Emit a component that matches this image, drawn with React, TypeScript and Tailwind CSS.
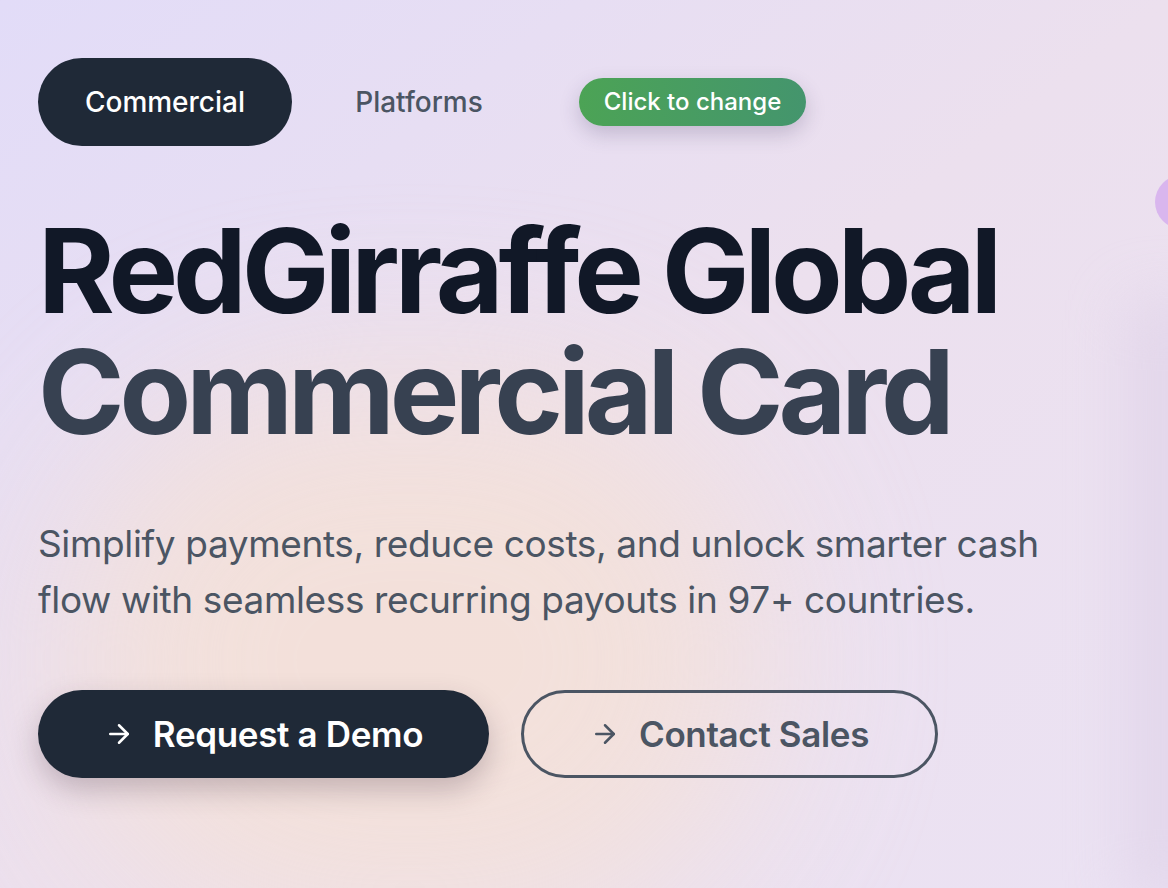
import React, { useState } from 'react';

const tabs = ['Commercial', 'Platforms'];

function Arrow({ className }: { className: string }) {
  return (
    <svg
      viewBox="0 0 24 24"
      fill="none"
      stroke="currentColor"
      strokeWidth="2"
      strokeLinecap="round"
      strokeLinejoin="round"
      className={className}
    >
      <path d="M5 12h14" />
      <path d="m12 5 7 7-7 7" />
    </svg>
  );
}

export default function App() {
  const [active, setActive] = useState<string>('Commercial');

  return (
    <div
      className="relative min-h-[888px] w-full overflow-hidden bg-[#e9e2f5]"
      style={{ fontFamily: 'Inter, "Noto Sans", sans-serif' }}
    >
      {/* background glows */}
      <div className="pointer-events-none absolute inset-0 bg-gradient-to-br from-[#e2dcf8] via-[#ece0ee] to-[#ebe2f3]" />
      <div className="pointer-events-none absolute left-[60px] top-[380px] h-[560px] w-[700px] rounded-full bg-[#f5e1d6] opacity-80 blur-[90px]" />
      <div className="pointer-events-none absolute right-[-40px] top-[300px] h-[600px] w-[80px] bg-[#dfd2e8] opacity-70 blur-[30px]" />
      <div className="pointer-events-none absolute left-[1155px] top-[175px] h-[54px] w-[54px] rounded-full bg-[#d9b6ee]" />

      <main className="relative flex flex-col items-start pl-[38px] pt-[58px]">
        <nav className="flex items-center">
          {tabs.map((tab) => (
            <button
              key={tab}
              type="button"
              onClick={() => setActive(tab)}
              className={
                tab === active
                  ? 'h-[88px] w-[254px] rounded-full bg-[#1f2937] text-[28px] font-medium text-white'
                  : 'h-[88px] w-[254px] rounded-full text-[28px] font-medium text-[#4b5563]'
              }
            >
              {tab}
            </button>
          ))}
          <button
            type="button"
            className="ml-[33px] h-[48px] w-[227px] rounded-full bg-gradient-to-r from-[#4ca355] to-[#44956d] text-[24px] font-medium text-white shadow-[0_8px_20px_rgba(60,50,90,0.22)]"
          >
            Click to change
          </button>
        </nav>

        <h1 className="mt-[64px] text-[117px] font-bold leading-[121px] tracking-[-0.043em]">
          <span className="block text-[#111827]">RedGirraffe Global</span>
          <span className="block text-[#374151]">Commercial Card</span>
        </h1>

        <p className="mt-[64px] max-w-[1040px] text-[37px] font-normal leading-[56px] tracking-[-0.01em] text-[#4b5563]">
          Simplify payments, reduce costs, and unlock smarter cash flow with
          seamless recurring payouts in 97+ countries.
        </p>

        <div className="mt-[62px] flex gap-[32px]">
          <button
            type="button"
            className="flex h-[88px] w-[451px] items-center justify-center gap-[19px] rounded-full bg-[#1f2937] text-[35px] font-semibold tracking-[-0.01em] text-white shadow-[0_12px_28px_rgba(60,40,60,0.25)]"
          >
            <Arrow className="h-[30px] w-[30px]" />
            Request a Demo
          </button>
          <button
            type="button"
            className="flex h-[88px] w-[417px] items-center justify-center gap-[19px] rounded-full border-[3px] border-[#4b5563] text-[35px] font-semibold tracking-[-0.01em] text-[#4b5563]"
          >
            <Arrow className="h-[30px] w-[30px]" />
            Contact Sales
          </button>
        </div>
      </main>
    </div>
  );
}
